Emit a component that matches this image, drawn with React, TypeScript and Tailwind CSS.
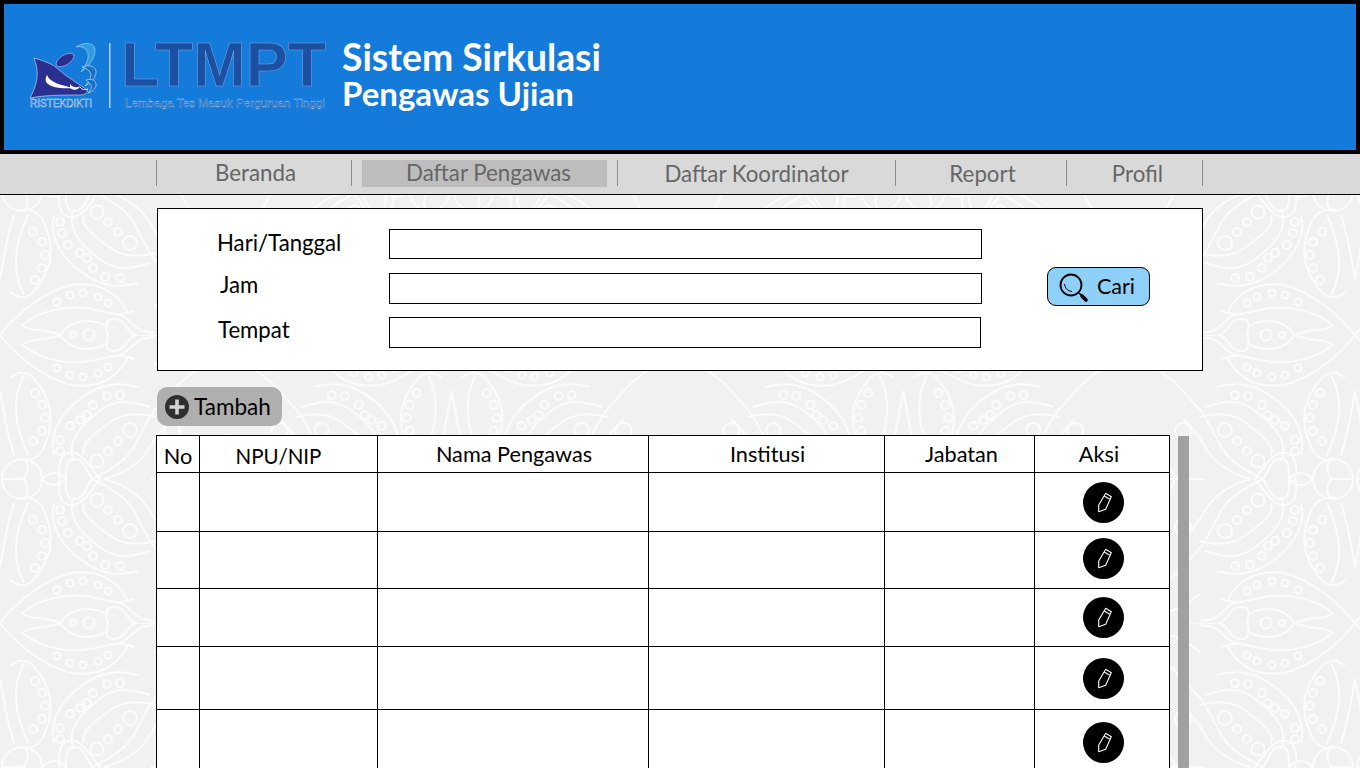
const NAV = [
  { label: 'Beranda', width: 'w-[195px]', text: 'pl-[3px]' },
  { label: 'Daftar Pengawas', width: 'w-[266px]', active: true, text: 'pl-[8px]' },
  { label: 'Daftar Koordinator', width: 'w-[278px]', text: 'pt-[1px]' },
  { label: 'Report', width: 'w-[171px]', text: 'pl-[3px] pt-[1px]' },
  { label: 'Profil', width: 'w-[136px]', text: 'pl-[6px] pt-[1px]' },
];

const FIELDS = [
  { label: 'Hari/Tanggal', rowClass: '', labelClass: 'ml-[59px] w-[172px] -translate-y-[1px]', inputClass: 'w-[593px] h-[30px]' },
  { label: 'Jam', rowClass: '', labelClass: 'ml-[62px] w-[169px] -translate-y-[4px]', inputClass: 'w-[593px] h-[31px]' },
  { label: 'Tempat', rowClass: '-mt-[1px]', labelClass: 'ml-[60px] w-[171px] -translate-y-[3px]', inputClass: 'w-[592px] h-[31px]' },
];

const ROWS = [
  { height: 'h-[59px]', offset: '' },
  { height: 'h-[57px]', offset: '-translate-y-[2px]' },
  { height: 'h-[58px]', offset: '' },
  { height: 'h-[63px]', offset: '' },
  { height: 'h-[68px]', offset: '-translate-y-[1px]' },
];

function BatikBackground() {
  const dots = [
    [57, -33, 3.5], [70, -40, 3.5], [83, -42, 3.5], [98, -38, 3.5], [108, -32, 3.5],
    [57, 33, 3.5], [70, 40, 3.5], [83, 42, 3.5], [98, 38, 3.5], [108, 32, 3.5],
    [73, 0, 3], [89, 0, 5.5],
  ];
  const chain = [
    [60, 116, 4], [60, 105, 4], [70, 91, 4], [80, 85, 4], [87, 80, 4], [93, 70, 4], [107, 61, 4], [120, 60, 4],
    [60, 175, 4], [62, 186, 4], [68, 198, 4], [80, 206, 4], [87, 211, 4], [93, 221, 4], [105, 230, 4], [120, 231, 4],
    [97, 126, 6.5], [108, 116, 4], [118, 106, 4], [130, 95, 7],
    [97, 165, 6.5], [108, 175, 4], [118, 185, 4], [130, 196, 7],
    [33, 106, 4], [42, 96, 4], [45, 83, 4], [42, 70, 4], [35, 58, 4],
    [33, 185, 4], [42, 195, 4], [45, 208, 4], [42, 221, 4], [35, 233, 4],
  ];
  const leaf = (
    <g>
      <path d="M0 0C17 -22 43 -42 70 -50C100 -54 118 -42 128 -22" />
      <path d="M0 0C17 22 43 42 70 50C100 54 118 42 128 22" />
      <path d="M28 -14C50 -28 76 -30 100 -24C116 -20 124 -20 134 -24" />
      <path d="M28 14C50 28 76 30 100 24C116 20 124 20 134 24" />
      <path d="M22 -10C32 -2 40 -8 60 0C40 8 32 2 22 10L28 14M22 -10L28 -14" />
      <path d="M60 0C68 -12 86 -20 108 -8M60 0C68 12 86 20 108 8" />
      <path d="M135 0C122 -8 126 -16 113 -16C104 -16 106 -5 108 0C106 5 104 16 113 16C126 16 122 8 135 0Z" />
      <path d="M113 -21C126 -22 130 -10 142 -4L154 -2M113 21C126 22 130 10 142 4L154 2" />
      {dots.map(([x, y, r]) => <circle key={`${x}-${y}`} cx={x} cy={y} r={r} />)}
    </g>
  );
  const half = (
    <g fill="none" stroke="#fcfcfc" strokeWidth="2">
      {leaf}
      <g transform="translate(0 288)">{leaf}</g>
      <path d="M92 144C84 132 84 124 74 124C64 124 66 138 66 144C66 150 64 164 74 164C84 164 84 156 92 144Z" />
      <path d="M60 144C56 128 62 116 74 118C84 120 90 132 100 144C90 156 84 168 74 170C62 172 56 160 60 144Z" />
      <circle cx="22" cy="144" r="20" />
      <path d="M42 144C50 136 58 136 66 144C58 152 50 152 42 144ZM2 144H24C30 134 28 128 24 124M24 144C30 154 28 160 24 164" />
      <path d="M10 43C18 36 28 36 34 44C50 62 58 84 42 116C36 124 26 128 18 124M24 40C12 62 14 90 28 120M0 56C4 76 6 96 14 120" />
      <path d="M10 245C18 252 28 252 34 244C50 226 58 204 42 172C36 164 26 160 18 164M24 248C12 226 14 198 28 168M0 232C4 212 6 192 14 168" />
      <path d="M54 120C48 96 64 70 96 54C110 48 124 48 138 52M74 126C66 108 78 92 102 74C118 64 130 66 150 72M84 120C80 110 92 100 112 86C124 78 140 78 156 82" />
      <path d="M54 168C48 192 64 218 96 234C110 240 124 240 138 236M74 162C66 180 78 196 102 214C118 224 130 222 150 216M84 168C80 178 92 188 112 202C124 210 140 210 156 206" />
      <path d="M92 144C108 136 128 126 136 108C146 90 150 78 160 70M92 144C108 152 128 162 136 180C146 198 150 210 160 218" />
      <path d="M104 144C120 140 140 130 150 112C158 98 164 92 172 84M104 144C120 148 140 158 150 176C158 190 164 196 172 204" />
      <path d="M132 0H170M150 144H226M160 70C180 44 200 30 226 22M160 218C180 244 200 258 226 266" />
      <path d="M154 -30C170 -16 186 -8 226 -4M154 30C170 16 186 8 226 4M154 258C170 272 186 280 226 284" />
      {chain.map(([x, y, r]) => <circle key={`${x}-${y}`} cx={x} cy={y} r={r} />)}
      <circle cx="172" cy="96" r="8" />
      <circle cx="172" cy="192" r="8" />
      <path d="M180 144C190 118 206 104 226 100M180 144C190 170 206 184 226 188" />
    </g>
  );
  return (
    <svg className="absolute inset-0 h-full w-full" aria-hidden="true">
      <defs>
        <pattern id="batik" width="451.66" height="288" patternUnits="userSpaceOnUse" patternTransform="translate(-225.83 47)">
          <g transform="translate(225.83 0)">
            {half}
            <g transform="scale(-1 1)">{half}</g>
          </g>
        </pattern>
      </defs>
      <rect width="100%" height="100%" fill="url(#batik)" />
    </svg>
  );
}

function MinistryLogo() {
  return (
    <svg viewBox="5 0 100 80" className="h-[80px] w-[100px] shrink-0">
      <path d="M56 12C64 7 74 7 75 14C75 24 69 31 61 37C67 29 70 21 67 16C65 12 60 11 56 12Z" fill="#2f9be0" stroke="#cfe9f9" strokeWidth=".5" />
      <path d="M62 32C70 29 77 32 76 38C75 44 70 48 65 51C70 46 72 41 70 37C68 34 65 33 62 32Z" fill="#1c6fc4" stroke="#d7ecfa" strokeWidth=".6" />
      <path d="M66 45C72 43 77 46 76 51C75 55 71 57 68 58C71 55 72 52 71 50C70 48 68 47 66 45Z" fill="#1c6fc4" stroke="#d7ecfa" strokeWidth=".6" />
      <ellipse cx="45" cy="25" rx="10" ry="5" transform="rotate(-32 45 25)" fill="#2b2f8f" stroke="#c7d8f5" strokeWidth=".5" />
      <path d="M14 23C24 26 33 29 38 34C47 42 56 47 67 55C68 57 66 60 60 60C43 60 25 60 10 63C17 50 20 38 14 23Z" fill="#2b2f8f" stroke="#d8e6fa" strokeWidth=".6" />
      <path d="M27 40C30 48 42 50 53 53C43 54 30 53 26 47C25 44 26 42 27 40Z" fill="#fff" />
      <path d="M50 49C53 53 57 53 60 51C59 55 54 56 50 53Z" fill="#fff" />
      <path d="M60 52C62 55 65 55 68 54" fill="none" stroke="#fff" strokeWidth="1" />
      <text x="10" y="72" fontFamily="'Liberation Sans', sans-serif" fontSize="10.5" textLength="62" lengthAdjust="spacingAndGlyphs" fill="#2c5fb5" stroke="#e8f3fc" strokeWidth=".4">RISTEKDIKTI</text>
      <rect x="89" y="8" width="1.5" height="65" fill="#b8cfe9" />
    </svg>
  );
}

function SearchIcon() {
  return (
    <svg viewBox="0 0 32 32" className="h-[32px] w-[32px] shrink-0" fill="none" stroke="#000">
      <circle cx="14" cy="14" r="10.5" strokeWidth="1.8" />
      <path d="M7.5 13C8 17 10.5 20 15 20.5" strokeWidth="1" />
      <path d="M22 22L25 25" strokeWidth="1.6" />
      <path d="M25 25L29 29" strokeWidth="3.6" strokeLinecap="round" />
    </svg>
  );
}

function PlusIcon() {
  return (
    <svg viewBox="0 0 24 24" className="h-[24px] w-[24px] shrink-0">
      <circle cx="12" cy="12" r="12" fill="#2f2f2f" />
      <path d="M12 4.5V19.5M4.5 12H19.5" stroke="#d2d2d2" strokeWidth="3.6" />
    </svg>
  );
}

function EditButton({ offset }: { offset: string }) {
  return (
    <div className={`mx-auto flex h-[41px] w-[41px] translate-x-[1px] items-center justify-center rounded-full bg-black ${offset}`}>
      <svg viewBox="0 0 41 41" className="h-[41px] w-[41px]" fill="none" stroke="#fff" strokeWidth="1.1" strokeLinejoin="round">
        <path d="M22.7 11.3L28.3 14.7L22.7 27.3L15.7 29.7L15.7 23Z" />
        <path d="M21.3 14L26.7 17.3" />
      </svg>
    </div>
  );
}

export default function App() {
  return (
    <div className="relative h-[768px] w-[1360px] overflow-hidden bg-[#f1f1f1] font-['Lato','Liberation_Sans',sans-serif] text-black">
      <BatikBackground />

      <div className="relative">
        <header className="flex h-[154px] items-start border-4 border-black bg-[#147bda] pl-[21px] pt-[31px]">
          <MinistryLogo />
          <div className="mt-[4px] flex w-[217px] shrink-0 flex-col">
            <div className="-ml-[4px] font-['Liberation_Sans',sans-serif] text-[63px] font-bold leading-[50px] text-[#1c50a3] [-webkit-text-stroke:0.6px_#6fa3dd]">LTMPT</div>
            <div className="mt-[7px] whitespace-nowrap font-['Liberation_Sans',sans-serif] text-[11.7px] leading-[14px] text-[#1c50a3] [-webkit-text-stroke:0.3px_#b4d3f2]">Lembaga Tes Masuk Perguruan Tinggi</div>
          </div>
          <div className="mt-[2px] flex flex-col font-bold text-white">
            <div className="whitespace-nowrap text-[37.3px] leading-[40px]">Sistem Sirkulasi</div>
            <div className="whitespace-nowrap text-[33px] leading-[32px]">Pengawas Ujian</div>
          </div>
        </header>

        <nav className="flex h-[41px] border-b border-black bg-[#d9d9d9] pl-[156px] pt-[6px]">
          {NAV.map((item) => (
            <div key={item.label} className={`${item.width} h-[26px] border-l border-[#8c8c8c] text-center text-[22.3px] leading-[26px] text-[#666666] ${item.active ? 'pl-[10px] pr-[10px]' : ''}`}>
              <div className={item.active ? `h-[27px] bg-[#bdbdbd] ${item.text}` : item.text}>{item.label}</div>
            </div>
          ))}
          <div className="h-[26px] w-0 border-l border-[#8c8c8c]" />
        </nav>

        <section className="ml-[157px] mt-[13px] flex h-[163px] w-[1046px] items-start border border-black bg-white">
          <div className="flex flex-col gap-[14px] pt-[20px]">
            {FIELDS.map((field) => (
              <div key={field.label} className={`flex items-center ${field.rowClass}`}>
                <div className={`text-[22.2px] leading-[26px] ${field.labelClass}`}>{field.label}</div>
                <div className={`border border-black bg-white ${field.inputClass}`} />
              </div>
            ))}
          </div>
          <button className="ml-[65px] mt-[58px] flex h-[39px] w-[103px] items-center gap-[8px] rounded-[9px] border border-black bg-[#8fd0f8] pl-[9px] text-[21.5px]">
            <SearchIcon />
            <span>Cari</span>
          </button>
        </section>

        <button className="ml-[157px] mt-[16px] flex h-[39px] w-[125px] items-center gap-[5px] rounded-[10px] bg-[#afafaf] pl-[8px] text-[22.5px]">
          <PlusIcon />
          <span>Tambah</span>
        </button>

        <div className="ml-[156px] mt-[9px] flex items-start gap-[8px]">
          <table className="w-[1014px] table-fixed border-collapse bg-white text-[21.7px]">
            <colgroup>
              <col className="w-[43px]" />
              <col className="w-[178px]" />
              <col className="w-[271px]" />
              <col className="w-[236px]" />
              <col className="w-[150px]" />
              <col className="w-[135px]" />
            </colgroup>
            <thead>
              <tr className="h-[37px]">
                <th className="border border-black pt-[4px] font-normal leading-[26px]">No</th>
                <th className="border border-black pr-[20px] pt-[4px] text-[20.5px] font-normal leading-[26px]">NPU/NIP</th>
                <th className="border border-black pl-[2px] font-normal leading-[26px]">Nama Pengawas</th>
                <th className="border border-black pl-[2px] font-normal leading-[26px]">Institusi</th>
                <th className="border border-black pl-[4px] font-normal leading-[26px]">Jabatan</th>
                <th className="border border-black pr-[6px] font-normal leading-[26px]">Aksi</th>
              </tr>
            </thead>
            <tbody>
              {ROWS.map((row) => (
                <tr key={row.height} className={row.height}>
                  <td className="border border-black" />
                  <td className="border border-black" />
                  <td className="border border-black" />
                  <td className="border border-black" />
                  <td className="border border-black" />
                  <td className="border border-black"><EditButton offset={row.offset} /></td>
                </tr>
              ))}
            </tbody>
          </table>
          <div className="mt-[1px] h-[340px] w-[11px] bg-[#a0a0a0]" />
        </div>
      </div>
    </div>
  );
}
